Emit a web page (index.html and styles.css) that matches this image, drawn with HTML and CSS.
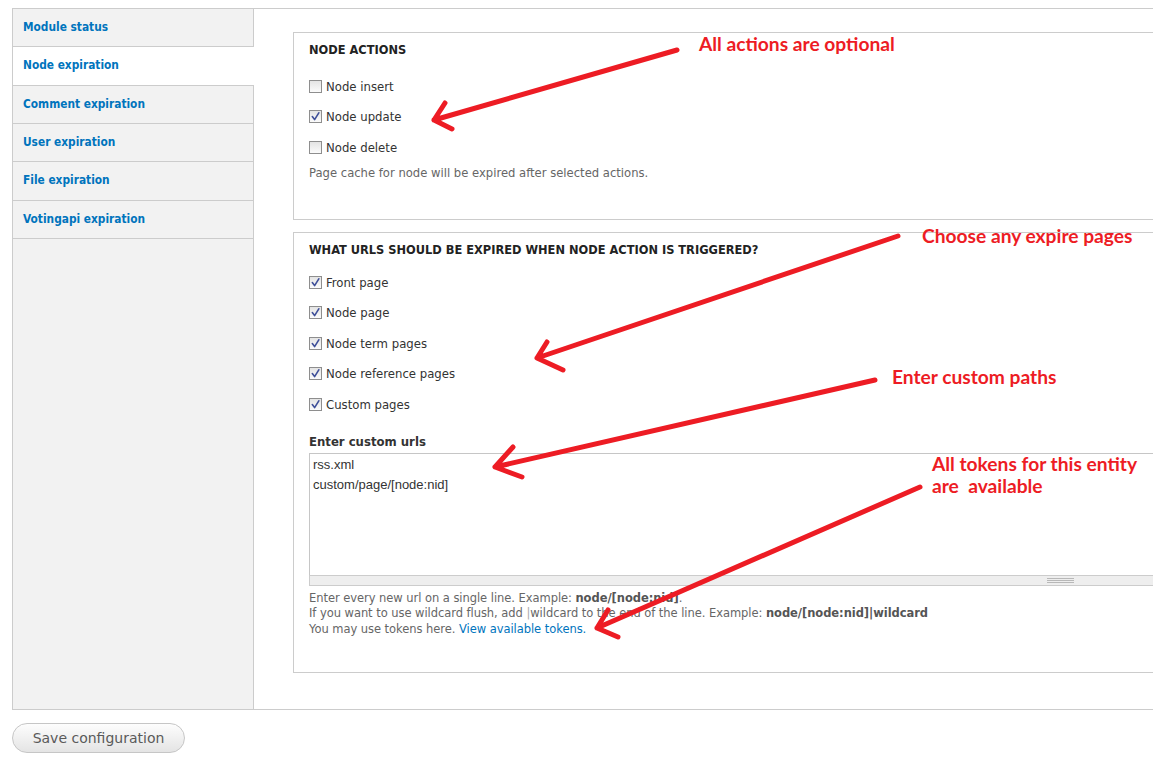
FILE: index.html
```html
<!DOCTYPE html>
<html>
<head>
<meta charset="utf-8">
<title>Node expiration</title>
<link rel="stylesheet" href="styles.css">
</head>
<body>
<div class="page">
  <div class="vtabs">
    <ul class="tabs">
      <li class="tab"><a>Module status</a></li>
      <li class="tab active"><a>Node expiration</a></li>
      <li class="tab"><a>Comment expiration</a></li>
      <li class="tab"><a>User expiration</a></li>
      <li class="tab"><a>File expiration</a></li>
      <li class="tab"><a>Votingapi expiration</a></li>
    </ul>
    <div class="panes">
      <div class="fieldset fs-actions">
        <div class="legend">Node actions</div>
        <div class="checks checks-actions">
          <label class="check"><span class="box"></span>Node insert</label>
          <label class="check"><span class="box checked"><svg viewBox="0 0 11 11" width="11" height="11"><path d="M2.3 5.6 L4.6 8.6 L8.8 1.8" /></svg></span>Node update</label>
          <label class="check"><span class="box"></span>Node delete</label>
        </div>
        <div class="desc desc-actions">Page cache for node will be expired after selected actions.</div>
      </div>
      <div class="fieldset fs-urls">
        <div class="legend">What URLs should be expired when node action is triggered?</div>
        <div class="checks checks-urls">
          <label class="check"><span class="box checked"><svg viewBox="0 0 11 11" width="11" height="11"><path d="M2.3 5.6 L4.6 8.6 L8.8 1.8" /></svg></span>Front page</label>
          <label class="check"><span class="box checked"><svg viewBox="0 0 11 11" width="11" height="11"><path d="M2.3 5.6 L4.6 8.6 L8.8 1.8" /></svg></span>Node page</label>
          <label class="check"><span class="box checked"><svg viewBox="0 0 11 11" width="11" height="11"><path d="M2.3 5.6 L4.6 8.6 L8.8 1.8" /></svg></span>Node term pages</label>
          <label class="check"><span class="box checked"><svg viewBox="0 0 11 11" width="11" height="11"><path d="M2.3 5.6 L4.6 8.6 L8.8 1.8" /></svg></span>Node reference pages</label>
          <label class="check"><span class="box checked"><svg viewBox="0 0 11 11" width="11" height="11"><path d="M2.3 5.6 L4.6 8.6 L8.8 1.8" /></svg></span>Custom pages</label>
        </div>
        <div class="field-label">Enter custom urls</div>
        <div class="textarea">
          <div class="ta-line">rss.xml</div>
          <div class="ta-line">custom/page/[node:nid]</div>
        </div>
        <div class="grippie"><span class="grip"></span></div>
        <div class="desc desc-urls">
          <div>Enter every new url on a single line. Example: <strong>node/[node:nid]</strong>.</div>
          <div>If you want to use wildcard flush, add <span class="pipe">|</span>wildcard to the end of the line. Example: <strong>node/[node:nid]|wildcard</strong></div>
          <div>You may use tokens here. <a class="link">View available tokens.</a></div>
        </div>
      </div>
    </div>
  </div>
  <button class="btn">Save configuration</button>

  <div class="annot">
    <svg class="arrows" width="1153" height="763" viewBox="0 0 1153 763">
      <path d="M677 50 L434 120 M445 103 L434 120 L452 129" />
      <path d="M898 236 L537 358 M547 342 L537 358 L563 370" />
      <path d="M875 380 L495 467 M513 447 L495 467 L522 477" />
      <path d="M920 487 L597 628 M608 610 L597 628 L618 637" />
    </svg>
    <div class="note note-1">All actions are optional</div>
    <div class="note note-2">Choose any expire pages</div>
    <div class="note note-3">Enter custom paths</div>
    <div class="note note-4">All tokens for this entity
are  available</div>
  </div>
</div>
</body>
</html>
```

FILE: styles.css
```css
html, body {
  margin: 0;
  padding: 0;
  overflow: hidden;
  background: #fff;
}

body {
  font-family: "DejaVu Sans Condensed", "DejaVu Sans", sans-serif;
  font-stretch: condensed;
  font-size: 13px;
  color: #333;
}

.page {
  position: relative;
  width: 1153px;
  height: 763px;
  box-sizing: border-box;
  padding: 8px 0 0 12px;
  overflow: hidden;
}

/* vertical tabs container */
.vtabs {
  display: flex;
  width: 1855px;
  box-sizing: border-box;
  border: 1px solid #ccc;
}

.tabs {
  flex: none;
  width: 241px;
  box-sizing: border-box;
  margin: 0;
  padding: 0;
  list-style: none;
  background: #f2f2f2;
  border-right: 1px solid #ccc;
}

.tab {
  height: 38.33px;
  box-sizing: border-box;
  border-bottom: 1px solid #ccc;
  display: flex;
  align-items: center;
  padding: 0 0 1px 10px;
  font-weight: bold;
  font-size: 11.8px;
  color: #0074bd;
}

.tab.active {
  background: #fff;
  margin-right: -1px;
}

.panes {
  flex: 1;
  padding: 23px 39px 36px 39px;
}

/* fieldsets */
.fieldset {
  border: 1px solid #ccc;
  padding: 0 15px;
}

.fs-actions {
  padding-bottom: 38px;
}

.fs-urls {
  margin-top: 12px;
  padding-bottom: 35px;
}

.legend {
  padding-top: 9px;
  line-height: 16px;
  font-weight: bold;
  font-size: 12.7px;
  color: #222;
  text-transform: uppercase;
}

.checks-actions {
  margin-top: 13px;
}

.checks-urls {
  margin-top: 9px;
}

.check {
  display: flex;
  align-items: center;
  height: 30.5px;
  font-size: 13px;
  color: #333;
}

.box {
  flex: none;
  width: 13px;
  height: 13px;
  box-sizing: border-box;
  border: 1px solid #8e8e8e;
  background: linear-gradient(#e4e4e4, #fbfbfb);
  margin-right: 4px;
  display: flex;
  align-items: center;
  justify-content: center;
}

.box svg {
  display: block;
}

.box svg path {
  fill: none;
  stroke: #3e4f99;
  stroke-width: 1.6;
  stroke-linecap: round;
  stroke-linejoin: round;
}

.desc {
  font-family: "DejaVu Sans", sans-serif;
  font-stretch: normal;
  font-size: 11.5px;
  color: #666;
}

.desc-actions {
  margin-top: 2.5px;
  line-height: 16px;
  font-size: 11.6px;
}

.desc-urls {
  margin-top: 5px;
  line-height: 15.3px;
  letter-spacing: -0.05px;
}

.desc strong {
  color: #555;
}

.pipe {
  color: #aaa;
}

.link {
  color: #0074bd;
}

.field-label {
  margin-top: 14.5px;
  line-height: 16px;
  font-weight: bold;
  font-size: 13px;
  color: #333;
}

.textarea {
  margin-top: 3px;
  height: 122px;
  box-sizing: border-box;
  border: 1px solid #c6c6c6;
  border-bottom: 0;
  padding: 1px 3px;
  font-family: "Liberation Sans", Arial, sans-serif;
  font-stretch: normal;
  font-size: 13px;
  line-height: 20px;
  color: #333;
}

.grippie {
  height: 11px;
  box-sizing: border-box;
  border: 1px solid #ccc;
  background: #eee;
  display: flex;
  align-items: center;
  justify-content: center;
}

.grip {
  width: 27px;
  height: 5px;
  background: repeating-linear-gradient(#b8b8b8 0 1px, transparent 1px 2px);
}

/* button */
.btn {
  display: block;
  margin-top: 13px;
  width: 173px;
  height: 30px;
  box-sizing: border-box;
  border: 1px solid #c6c6c6;
  border-radius: 15px;
  background: linear-gradient(#fdfdfd, #e4e4e4);
  font-family: "DejaVu Sans", sans-serif;
  font-size: 14px;
  color: #5a5a5a;
  padding: 0;
}

/* annotations overlay */
.annot {
  position: absolute;
  left: 0;
  top: 0;
  width: 1153px;
  height: 763px;
  pointer-events: none;
}

.arrows {
  position: absolute;
  left: 0;
  top: 0;
}

.arrows path {
  fill: none;
  stroke: #ed1c24;
  stroke-width: 5;
  stroke-linecap: round;
  stroke-linejoin: round;
}

.note {
  position: absolute;
  font-family: Lato, "Open Sans", sans-serif;
  font-stretch: normal;
  font-weight: bold;
  font-size: 19.2px;
  line-height: 22px;
  color: #ed1c24;
  white-space: pre;
}

.note-1 { left: 699px; top: 33px; }
.note-2 { left: 922px; top: 225px; }
.note-3 { left: 892px; top: 366px; }
.note-4 { left: 932px; top: 453px; }
```
